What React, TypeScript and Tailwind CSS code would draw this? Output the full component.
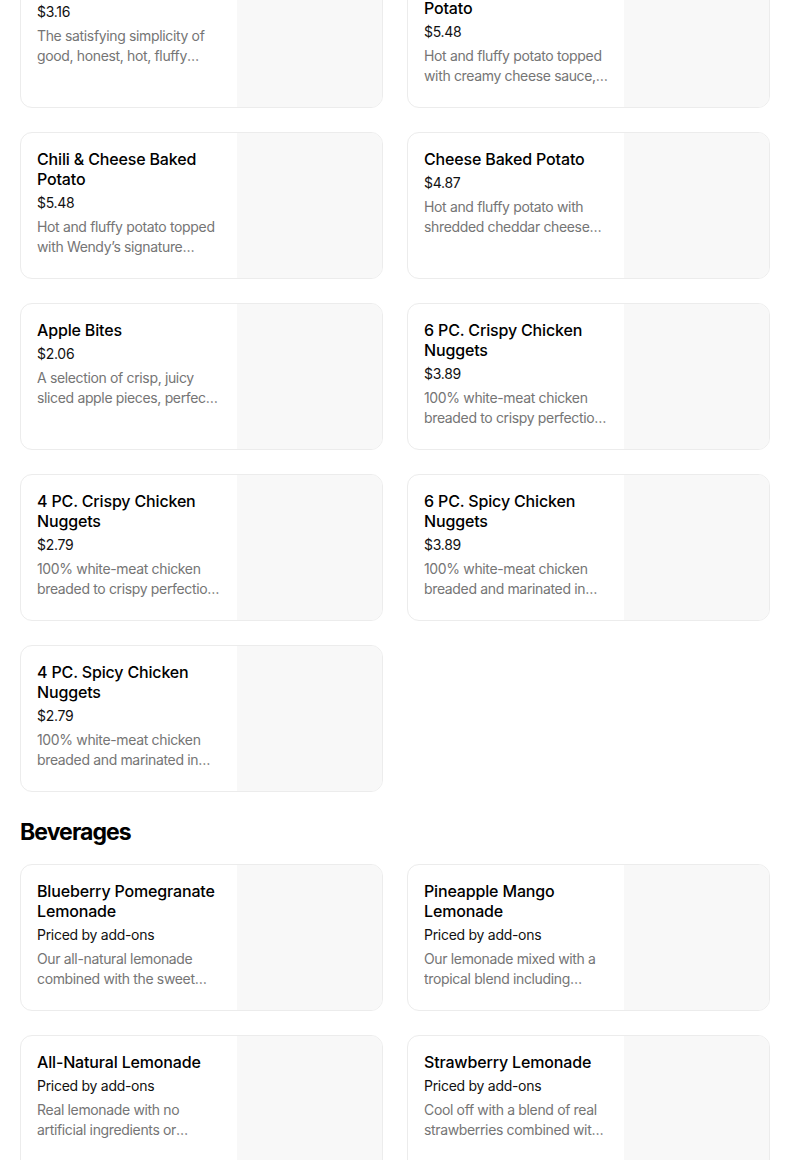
import React from "react";

type Item = { name: string; price: string; desc: string };

const SIDES: Item[] = [
  { name: "Plain Baked Potato", price: "$3.16", desc: "The satisfying simplicity of good, honest, hot, fluffy baked potato goodness." },
  { name: "Bacon Cheese Baked Potato", price: "$5.48", desc: "Hot and fluffy potato topped with creamy cheese sauce, shredded cheddar and bacon." },
  { name: "Chili & Cheese Baked Potato", price: "$5.48", desc: "Hot and fluffy potato topped with Wendy’s signature homestyle chili and shredded cheddar." },
  { name: "Cheese Baked Potato", price: "$4.87", desc: "Hot and fluffy potato with shredded cheddar cheese and warm cheese sauce." },
  { name: "Apple Bites", price: "$2.06", desc: "A selection of crisp, juicy sliced apple pieces, perfect for snacking." },
  { name: "6 PC. Crispy Chicken Nuggets", price: "$3.89", desc: "100% white-meat chicken breaded to crispy perfection and golden brown." },
  { name: "4 PC. Crispy Chicken Nuggets", price: "$2.79", desc: "100% white-meat chicken breaded to crispy perfection and golden brown." },
  { name: "6 PC. Spicy Chicken Nuggets", price: "$3.89", desc: "100% white-meat chicken breaded and marinated in spicy peppery seasoning." },
  { name: "4 PC. Spicy Chicken Nuggets", price: "$2.79", desc: "100% white-meat chicken breaded and marinated in spicy peppery seasoning." },
];

const BEVERAGES: Item[] = [
  { name: "Blueberry Pomegranate Lemonade", price: "Priced by add-ons", desc: "Our all-natural lemonade combined with the sweet taste of blueberry and pomegranate." },
  { name: "Pineapple Mango Lemonade", price: "Priced by add-ons", desc: "Our lemonade mixed with a tropical blend including pineapple and mango." },
  { name: "All-Natural Lemonade", price: "Priced by add-ons", desc: "Real lemonade with no artificial ingredients or preservatives." },
  { name: "Strawberry Lemonade", price: "Priced by add-ons", desc: "Cool off with a blend of real strawberries combined with our lemonade." },
];

function MenuCard({ item }: { item: Item }) {
  return (
    <div className="flex h-[147px] overflow-hidden rounded-xl border border-[#ececec] bg-white">
      <div className="w-[216px] shrink-0 px-4 pt-4">
        <p className="line-clamp-2 text-[16px] leading-5 font-medium tracking-[-0.01em] text-black">{item.name}</p>
        <p className="mt-1 text-[14px] leading-5 tracking-[-0.02em] text-[#111]">{item.price}</p>
        <p className="mt-1 line-clamp-2 text-[14px] leading-5 tracking-[-0.025em] text-[#757575]">{item.desc}</p>
      </div>
      <div className="flex-1 bg-[#f8f8f8]" />
    </div>
  );
}

export default function App() {
  return (
    <div
      className="h-[1160px] overflow-hidden bg-white"
      style={{ fontFamily: "Inter, 'Liberation Sans', sans-serif" }}
    >
      <div className="-mt-[39px] ml-5 w-[750px]">
        <div className="grid grid-cols-2 gap-6">
          {SIDES.map((it) => (
            <MenuCard key={it.name} item={it} />
          ))}
        </div>
        <h2 className="mt-6 mb-4 text-[23px] leading-8 font-bold tracking-[-0.04em] text-black">Beverages</h2>
        <div className="grid grid-cols-2 gap-6">
          {BEVERAGES.map((it) => (
            <MenuCard key={it.name} item={it} />
          ))}
        </div>
      </div>
    </div>
  );
}
